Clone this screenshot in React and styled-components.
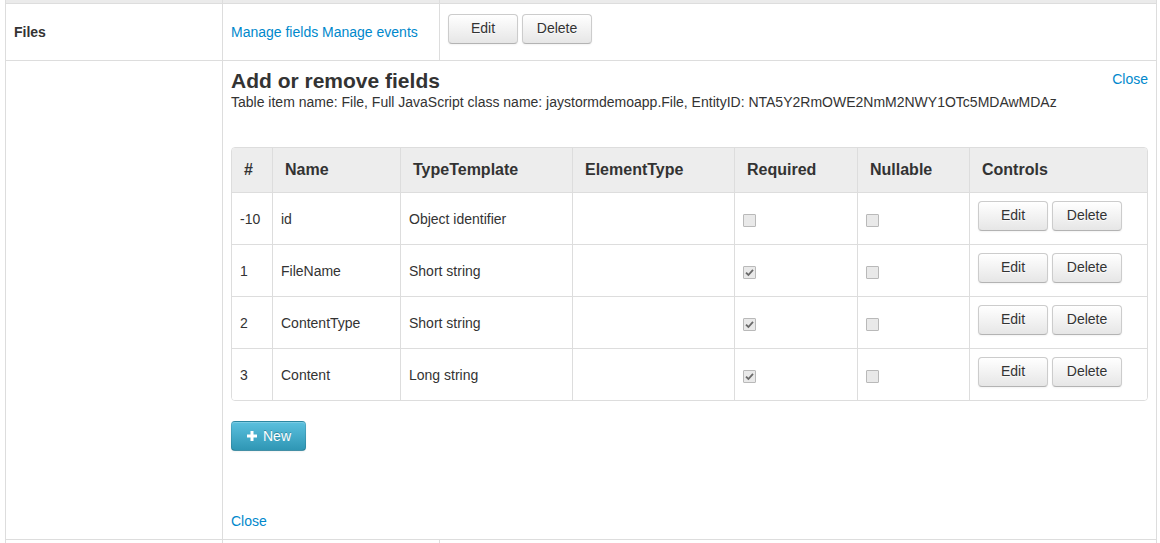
import React from "react";
import styled, { createGlobalStyle, css } from "styled-components";

const GlobalStyle = createGlobalStyle`
  html, body {
    margin: 0;
    padding: 0;
    background: #fff;
    overflow: hidden;
  }
  body {
    font-family: "Liberation Sans", Arial, Helvetica, sans-serif;
    font-size: 14px;
    line-height: 20px;
    color: #333;
  }
  * {
    box-sizing: border-box;
  }
`;

const Grid = styled.div`
  width: 1152px;
  margin-left: 5px;
  border-left: 1px solid #ddd;
  border-right: 1px solid #ddd;
`;

const Row = styled.div`
  display: grid;
  grid-template-columns: 217px 217px 1fr;
  ${(p) =>
    p.$strip
      ? css`
          height: 3px;
          background: #ebebeb;
        `
      : css`
          border-top: 1px solid #ddd;
        `}
  ${(p) =>
    p.$tail &&
    css`
      height: 40px;
    `}
`;

const Cell = styled.div`
  border-right: ${(p) => (p.$last ? "none" : "1px solid #ddd")};
  ${(p) => p.$span && `grid-column: ${p.$span};`}
  ${(p) =>
    p.$middle &&
    css`
      display: flex;
      align-items: center;
      height: 56px;
      padding: 0 8px;
    `}
  ${(p) =>
    p.$pad &&
    css`
      padding: 8px;
    `}
`;

const Name = styled.span`
  font-weight: bold;
`;

const Link = styled.a`
  color: #0088cc;
  text-decoration: none;
  cursor: pointer;
`;

const CloseLink = styled(Link)`
  float: ${(p) => (p.$right ? "right" : "none")};
  display: ${(p) => (p.$right ? "inline" : "inline-block")};
  margin-top: ${(p) => (p.$right ? "0" : "60px")};
`;

const Heading = styled.h3`
  margin: 0;
  font-size: 21px;
  line-height: 23px;
  font-weight: bold;
  color: #333;
`;

const Info = styled.div`
  font-size: 14px;
  line-height: 20px;
`;

const Btn = styled.button`
  display: inline-block;
  width: 70px;
  height: 30px;
  padding: 3px 0 5px;
  margin: 0;
  font-family: inherit;
  font-size: 14px;
  line-height: 20px;
  color: #333;
  text-align: center;
  text-shadow: 0 1px 1px rgba(255, 255, 255, 0.75);
  background-color: #f5f5f5;
  background-image: linear-gradient(to bottom, #ffffff, #e6e6e6);
  border: 1px solid #cccccc;
  border-bottom-color: #b3b3b3;
  border-radius: 4px;
  box-shadow: inset 0 1px 0 rgba(255, 255, 255, 0.2),
    0 1px 2px rgba(0, 0, 0, 0.05);
  cursor: pointer;
`;

const BtnGroup = styled.div`
  display: flex;
  gap: 4px;
  margin-bottom: ${(p) => p.$lift}px;
`;

const NewBtn = styled.button`
  display: inline-flex;
  align-items: center;
  gap: 5px;
  height: 30px;
  margin-top: 20px;
  padding: 4px 14px 4px 14px;
  font-family: inherit;
  font-size: 14px;
  line-height: 20px;
  color: #fff;
  text-shadow: 0 -1px 0 rgba(0, 0, 0, 0.25);
  background-color: #49afcd;
  background-image: linear-gradient(to bottom, #5bc0de, #2f96b4);
  border: 1px solid rgba(0, 0, 0, 0.1);
  border-bottom-color: rgba(0, 0, 0, 0.25);
  border-radius: 4px;
  box-shadow: inset 0 1px 0 rgba(255, 255, 255, 0.2),
    0 1px 2px rgba(0, 0, 0, 0.05);
  cursor: pointer;
`;

const Fields = styled.div`
  margin-top: 35px;
  width: 917px;
  border: 1px solid #ddd;
  border-radius: 4px;
  overflow: hidden;
`;

const FieldRow = styled.div`
  display: grid;
  grid-template-columns: 40px 128px 172px 162px 123px 112px 178px;
  height: ${(p) => (p.$head ? "44px" : "52px")};
  background: ${(p) => (p.$head ? "#ededed" : "#fff")};
  border-top: ${(p) => (p.$head ? "none" : "1px solid #ddd")};
`;

const FieldCell = styled.div`
  display: flex;
  align-items: center;
  padding: ${(p) => (p.$head ? "0 12px" : "0 8px")};
  border-left: ${(p) => (p.$first ? "none" : "1px solid #ddd")};
  font-size: ${(p) => (p.$head ? "16px" : "14px")};
  font-weight: ${(p) => (p.$head ? "bold" : "normal")};
  white-space: nowrap;
`;

const Check = styled.span`
  display: inline-flex;
  align-items: center;
  justify-content: center;
  width: 13px;
  height: 13px;
  margin-top: 3px;
  background: #e9e9e9;
  border: 1px solid #b9b9b9;
  border-radius: 1px;
`;

const CheckBox = ({ checked }) => (
  <Check>
    {checked && (
      <svg width="9" height="9" viewBox="0 0 9 9">
        <path
          d="M1 4.6 L3.4 7 L8 1.8"
          fill="none"
          stroke="#6a6a6a"
          strokeWidth="1.8"
        />
      </svg>
    )}
  </Check>
);

const PlusIcon = () => (
  <svg width="12" height="12" viewBox="0 0 12 12">
    <path d="M6 1 V11 M1 6 H11" stroke="#fff" strokeWidth="3" />
  </svg>
);

const columns = [
  "#",
  "Name",
  "TypeTemplate",
  "ElementType",
  "Required",
  "Nullable",
  "Controls",
];

const fields = [
  { idx: "-10", name: "id", type: "Object identifier", required: false },
  { idx: "1", name: "FileName", type: "Short string", required: true },
  { idx: "2", name: "ContentType", type: "Short string", required: true },
  { idx: "3", name: "Content", type: "Long string", required: true },
];

const App = () => {
  return (
    <>
      <GlobalStyle />
      <Grid>
        <Row $strip>
          <Cell />
          <Cell />
          <Cell $last />
        </Row>
        <Row>
          <Cell $middle>
            <Name>Files</Name>
          </Cell>
          <Cell $middle>
            <Link>Manage fields</Link>&nbsp;<Link>Manage events</Link>
          </Cell>
          <Cell $middle $last>
            <BtnGroup $lift={6}>
              <Btn>Edit</Btn>
              <Btn>Delete</Btn>
            </BtnGroup>
          </Cell>
        </Row>
        <Row>
          <Cell />
          <Cell $pad $last $span="2 / -1">
            <CloseLink $right>Close</CloseLink>
            <Heading>Add or remove fields</Heading>
            <Info>
              Table item name: File, Full JavaScript class name:
              jaystormdemoapp.File, EntityID: NTA5Y2RmOWE2NmM2NWY1OTc5MDAwMDAz
            </Info>
            <Fields>
              <FieldRow $head>
                {columns.map((c, i) => (
                  <FieldCell key={c} $head $first={i === 0}>
                    {c}
                  </FieldCell>
                ))}
              </FieldRow>
              {fields.map((f) => (
                <FieldRow key={f.idx}>
                  <FieldCell $first>{f.idx}</FieldCell>
                  <FieldCell>{f.name}</FieldCell>
                  <FieldCell>{f.type}</FieldCell>
                  <FieldCell />
                  <FieldCell>
                    <CheckBox checked={f.required} />
                  </FieldCell>
                  <FieldCell>
                    <CheckBox />
                  </FieldCell>
                  <FieldCell>
                    <BtnGroup $lift={5}>
                      <Btn>Edit</Btn>
                      <Btn>Delete</Btn>
                    </BtnGroup>
                  </FieldCell>
                </FieldRow>
              ))}
            </Fields>
            <NewBtn>
              <PlusIcon />
              New
            </NewBtn>
            <div>
              <CloseLink>Close</CloseLink>
            </div>
          </Cell>
        </Row>
        <Row $tail>
          <Cell />
          <Cell />
          <Cell $last />
        </Row>
      </Grid>
    </>
  );
};

export default App;
